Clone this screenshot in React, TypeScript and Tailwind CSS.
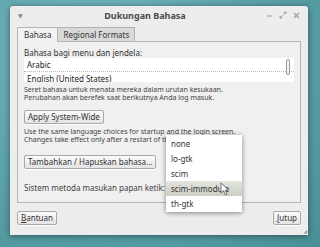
function Btn({ children, className = "" }: { children: React.ReactNode; className?: string }) {
  return (
    <div
      className={`flex h-[14px] items-center rounded-[2px] border border-[#a9a9a9] bg-gradient-to-b from-[#fbfbfb] to-[#e4e4e4] px-[3px] text-[8px] text-[#333] shadow-[0_1px_0_#fff] ${className}`}
    >
      {children}
    </div>
  );
}

const menuItems = ["none", "lo-gtk", "scim", "scim-immodule", "th-gtk"];

export default function App() {
  return (
    <div
      className="relative h-[247px] w-[320px] overflow-hidden bg-[radial-gradient(ellipse_at_30%_20%,#72b8bd_0%,#5aa2a8_55%,#4a8f96_100%)] pt-[6px] pl-[10px]"
      style={{ fontFamily: '"Noto Sans", "DejaVu Sans", sans-serif' }}
    >
      {/* window */}
      <div className="flex h-[229px] w-[298px] flex-col rounded-t-[3px] bg-[#ededed] shadow-[0_1px_6px_rgba(0,0,0,0.45)]">
        {/* title bar */}
        <div className="relative flex h-[20px] items-center justify-center pr-[28px]">
          <span className="absolute left-[8px] top-[6px] text-[6px] text-[#888]">▼</span>
          <span className="text-[9px] font-bold text-[#4a4a4a]">Dukungan Bahasa</span>
          <div className="absolute right-[8px] top-[5px] flex items-center gap-[6px] text-[#999]">
            <svg width="7" height="7" viewBox="0 0 7 7">
              <path d="M1 4h5" stroke="#9a9a9a" strokeWidth="1" />
            </svg>
            <svg width="8" height="8" viewBox="0 0 8 8">
              <path d="M1 7l2.5-2.5M4.5 3.5L7 1M5 1h2v2M1 5v2h2" stroke="#9a9a9a" strokeWidth="1" fill="none" />
            </svg>
            <svg width="7" height="7" viewBox="0 0 7 7">
              <path d="M1 1l5 5M6 1l-5 5" stroke="#9a9a9a" strokeWidth="1.1" />
            </svg>
          </div>
        </div>

        {/* tabs */}
        <div className="flex h-[15px] items-end pl-[7px]">
          <div className="relative z-10 -mb-px flex h-[15px] items-center border border-b-0 border-[#b5b5b5] bg-[#f2f2f2] px-[6px] text-[8px] text-[#333]">
            Bahasa
          </div>
          <div className="flex h-[14px] items-center border border-l-0 border-b-0 border-[#b0b0b0] bg-[#d9d9d9] px-[5px] text-[8px] text-[#333]">
            Regional Formats
          </div>
        </div>

        {/* notebook pane */}
        <div className="mx-[7px] flex h-[162px] flex-col border border-[#b5b5b5] bg-[#f0f0f0] px-[6px] pt-[5px]">
          <div className="text-[8px] leading-[11px] text-[#333]">Bahasa bagi menu dan jendela:</div>
          <div className="relative h-[24px] overflow-hidden bg-white">
            <div className="flex h-[14px] items-center border-b border-dotted border-[#b8b8b8] pl-[3px] text-[8px] text-[#222]">
              Arabic
            </div>
            <div className="flex h-[12px] items-center pl-[3px] pt-[2px] text-[8px] leading-[10px] text-[#222]">
              English (United States)
            </div>
            <div className="absolute right-[4px] top-[1px] h-[16px] w-[4px] rounded-[2px] border border-[#999] bg-[#f4f4f4]" />
          </div>
          <div className="mt-[4px] text-[7px] leading-[8px] text-[#444]">
            <div>Seret bahasa untuk menata mereka dalam urutan kesukaan.</div>
            <div>Perubahan akan berefek saat berikutnya Anda log masuk.</div>
          </div>
          <div className="mt-[8px] flex">
            <Btn>Apply System-Wide</Btn>
          </div>
          <div className="mt-[4px] text-[7px] leading-[8px] text-[#444]">
            <div>Use the same language choices for startup and the login screen.</div>
            <div>Changes take effect only after a restart of the system.</div>
          </div>
          <div className="mt-[11px] flex">
            <Btn>Tambahkan / Hapuskan bahasa...</Btn>
          </div>
          <div className="mt-[13px] text-[8px] text-[#444]">Sistem metoda masukan papan ketik:</div>
        </div>

        {/* bottom buttons */}
        <div className="mt-[8px] flex items-center justify-between px-[7px]">
          <Btn>
            <span className="underline">B</span>antuan
          </Btn>
          <Btn>
            <span className="underline">J</span>utup
          </Btn>
        </div>
        <div className="relative flex-1">
          <span className="absolute bottom-[1px] right-[1px] text-[5px] leading-none text-[#999]">◢</span>
        </div>
      </div>

      {/* popup menu */}
      <div className="absolute left-[166px] top-[135px] w-[76px] bg-white shadow-[0_1px_5px_rgba(0,0,0,0.45)]">
        <div className="py-[1px]">
          {menuItems.map((m) => (
            <div
              key={m}
              className={`flex h-[15px] items-center pl-[5px] text-[8px] text-[#333] ${
                m === "scim-immodule" ? "bg-gradient-to-b from-[#e3e6df] to-[#c9cfc3]" : ""
              }`}
            >
              {m}
            </div>
          ))}
        </div>
        <svg className="absolute left-[54px] top-[47px]" width="10" height="14" viewBox="0 0 10 14">
          <path d="M1 1v10l2.5-2.3 2 4.3 1.6-.8-2-4.1H8.5z" fill="#fff" stroke="#555" strokeWidth="0.8" />
        </svg>
      </div>
    </div>
  );
}
